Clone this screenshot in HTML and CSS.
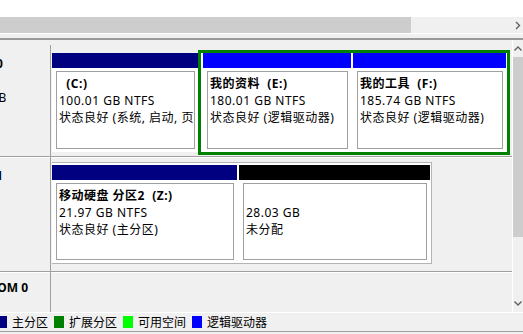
FILE: index.html
```html
<!DOCTYPE html>
<html lang="zh-CN">

<head>
    <meta charset="UTF-8">
    <title>磁盘管理</title>
    <link rel="stylesheet" href="styles.css">
</head>

<body>
    <div class="volume-list"></div>

    <div class="hscroll">
        <div class="hscroll-thumb"></div>
        <div class="hscroll-track"></div>
        <div class="scroll-btn">
            <svg width="6" height="9" viewBox="0 0 6 9"><path d="M1 1 L4.5 4.5 L1 8" fill="none" stroke="#606060" stroke-width="1.4"/></svg>
        </div>
    </div>

    <div class="splitter"></div>

    <div class="disk-pane">
        <div class="disk-list">
            <!-- disk 0 -->
            <div class="disk-row">
                <div class="disk-label">
                    <div class="label-text">
                        <div class="disk-name">
                            <svg width="16" height="12" viewBox="0 0 16 12"><rect x="0.5" y="2.5" width="15" height="8" fill="#d8d8d8" stroke="#707070"/><rect x="11" y="6" width="3" height="2" fill="#3a3"/></svg>
                            磁盘 0
                        </div>
                        <div>基本</div>
                        <div>465.76 GB</div>
                        <div>联机</div>
                    </div>
                </div>
                <div class="disk-graph">
                    <div class="part" style="width: 146px">
                        <div class="part-head primary"></div>
                        <div class="part-body">
                            <div class="part-box">
                                <div class="part-title">  (C:)</div>
                                <div>100.01 GB NTFS</div>
                                <div>状态良好 (系统, 启动, 页面文件, 活动, 故障转储, 主分区)</div>
                            </div>
                        </div>
                    </div>
                    <div class="extended">
                        <div class="part" style="width: 148px">
                            <div class="part-head logical"></div>
                            <div class="part-body">
                                <div class="part-box">
                                    <div class="part-title">我的资料  (E:)</div>
                                    <div>180.01 GB NTFS</div>
                                    <div>状态良好 (逻辑驱动器)</div>
                                </div>
                            </div>
                        </div>
                        <div class="part grow">
                            <div class="part-head logical"></div>
                            <div class="part-body">
                                <div class="part-box">
                                    <div class="part-title">我的工具  (F:)</div>
                                    <div>185.74 GB NTFS</div>
                                    <div>状态良好 (逻辑驱动器)</div>
                                </div>
                            </div>
                        </div>
                    </div>
                </div>
            </div>

            <!-- disk 1 -->
            <div class="disk-row">
                <div class="disk-label">
                    <div class="label-text">
                        <div class="disk-name">
                            <svg width="16" height="12" viewBox="0 0 16 12"><rect x="0.5" y="2.5" width="15" height="8" fill="#d8d8d8" stroke="#707070"/><rect x="11" y="6" width="3" height="2" fill="#3a3"/></svg>
                            磁盘 1
                        </div>
                        <div>可移动</div>
                        <div>50.00 GB</div>
                        <div>联机</div>
                    </div>
                </div>
                <div class="disk-graph">
                    <div class="disk-frame">
                        <div class="part" style="width: 185px">
                            <div class="part-head primary"></div>
                            <div class="part-body">
                                <div class="part-box">
                                    <div class="part-title">移动硬盘 分区2  (Z:)</div>
                                    <div>21.97 GB NTFS</div>
                                    <div>状态良好 (主分区)</div>
                                </div>
                            </div>
                        </div>
                        <div class="part" style="width: 191px">
                            <div class="part-head unallocated"></div>
                            <div class="part-body">
                                <div class="part-box">
                                    <div class="part-title"> </div>
                                    <div>28.03 GB</div>
                                    <div>未分配</div>
                                </div>
                            </div>
                        </div>
                    </div>
                </div>
            </div>

            <!-- cd-rom -->
            <div class="disk-row cdrom">
                <div class="disk-label">
                    <div class="label-text">
                        <div class="disk-name">
                            <svg width="16" height="12" viewBox="0 0 16 12"><circle cx="8" cy="6" r="5.5" fill="#e0e0e0" stroke="#707070"/><circle cx="8" cy="6" r="1.5" fill="#fff" stroke="#707070"/></svg>
                            CD-ROM 0
                        </div>
                        <div>DVD (G:)</div>
                    </div>
                </div>
                <div class="disk-graph"></div>
            </div>
        </div>

        <div class="vscroll">
            <div class="vscroll-btn">
                <svg width="8" height="5" viewBox="0 0 8 5"><path d="M0.5 4.5 L4 1 L7.5 4.5" fill="none" stroke="#606060" stroke-width="1.4"/></svg>
            </div>
            <div class="vscroll-thumb"></div>
            <div class="vscroll-track"></div>
            <div class="vscroll-btn">
                <svg width="8" height="5" viewBox="0 0 8 5"><path d="M0.5 0.5 L4 4 L7.5 0.5" fill="none" stroke="#606060" stroke-width="1.4"/></svg>
            </div>
        </div>
    </div>

    <div class="legend">
        <span class="legend-item"><i class="swatch primary"></i>主分区</span>
        <span class="legend-item"><i class="swatch extended-color"></i>扩展分区</span>
        <span class="legend-item"><i class="swatch free"></i>可用空间</span>
        <span class="legend-item"><i class="swatch logical"></i>逻辑驱动器</span>
    </div>
</body>

</html>
```

FILE: styles.css
```css
body {
    font-family: "Noto Sans", "Noto Sans CJK SC", sans-serif;
    font-size: 12px;
    color: #000;
    background-color: #f0f0f0;
    margin: 0;
    padding: 0;
    width: 523px;
    height: 334px;
    overflow: hidden;
}

.volume-list {
    height: 17px;
    background-color: #fff;
}

/* top horizontal scrollbar */
.hscroll {
    display: flex;
    height: 16px;
}

.hscroll-thumb {
    width: 411px;
    background-color: #cdcdcd;
}

.hscroll-track {
    flex: 1;
    background-color: #f0f0f0;
}

.scroll-btn {
    width: 10px;
    display: flex;
    align-items: center;
    justify-content: center;
    background-color: #f0f0f0;
}

.splitter {
    height: 4px;
    border-top: 1px solid #fff;
    border-bottom: 2px solid #9a9a9a;
}

/* graphical disk view */
.disk-pane {
    display: flex;
    height: 272px;
}

.disk-list {
    flex: 1;
    padding-top: 5px;
    overflow: hidden;
}

.disk-row {
    display: flex;
    height: 115px;
    box-sizing: border-box;
    border-bottom: 1px solid #a0a0a0;
    box-shadow: 0 1px 0 #fff;
}

.disk-row:first-child {
    height: 112px;
}

.disk-label {
    width: 51px;
    flex: none;
    border-right: 1px solid #a0a0a0;
    overflow: hidden;
    padding-top: 10px;
    box-sizing: border-box;
}

.cdrom .disk-label {
    padding-top: 7px;
}

.label-text {
    margin-left: -51px;
    white-space: nowrap;
    line-height: 17px;
}

.disk-name {
    display: flex;
    align-items: center;
    gap: 4px;
    font-weight: bold;
}

.disk-graph {
    flex: 1;
    display: flex;
    align-items: flex-start;
    padding: 5px 0 0 1px;
}

.part {
    display: flex;
    flex-direction: column;
    background-color: #fff;
    height: 99px;
    box-sizing: border-box;
    flex: none;
}

.part.grow {
    flex: 1;
}

.disk-graph > .part {
    margin-top: 3px;
}

.part-head {
    height: 15px;
    flex: none;
}

.part-body {
    flex: 1;
    padding: 3px 3px 3px 4px;
    display: flex;
    min-height: 0;
}

.part-box {
    flex: 1;
    border: 1px solid #a0a0a0;
    padding: 3px 2px;
    line-height: 17px;
    letter-spacing: 0.5px;
    white-space: nowrap;
    overflow: hidden;
    min-width: 0;
}

.part-title {
    font-weight: bold;
    white-space: pre;
    height: 17px;
}

.extended {
    display: flex;
    gap: 2px;
    width: 312px;
    height: 105px;
    box-sizing: border-box;
    border: 3px solid #008000;
    padding: 0 1px 0 2px;
    background-color: #fff;
}

.extended .part {
    height: 99px;
}

.disk-frame {
    display: flex;
    gap: 2px;
    border: 1px solid #b4b4b4;
    border-left: none;
    padding: 2px 1px 0 0;
    background-color: #fff;
}

.disk-frame .part {
    height: 98px;
}

/* partition colours */
.primary {
    background-color: #000080;
}

.logical {
    background-color: #0000ff;
}

.unallocated {
    background-color: #000;
}

.extended-color {
    background-color: #008000;
}

.free {
    background-color: #00ff00;
}

/* right vertical scrollbar */
.vscroll {
    width: 10px;
    border-left: 1px solid #fff;
    display: flex;
    flex-direction: column;
    background-color: #f0f0f0;
}

.vscroll-btn {
    height: 17px;
    display: flex;
    align-items: center;
    justify-content: center;
}

.vscroll-thumb {
    height: 180px;
    background-color: #cdcdcd;
}

.vscroll-track {
    flex: 1;
}

/* legend */
.legend {
    display: flex;
    align-items: center;
    gap: 6px;
    height: 18px;
    margin-left: -3px;
    border-top: 1px solid #fff;
    border-bottom: 1px solid #a0a0a0;
    white-space: nowrap;
}

.legend-item {
    display: flex;
    align-items: center;
}

.swatch {
    display: inline-block;
    width: 10px;
    height: 12px;
    margin-right: 5px;
}
```
